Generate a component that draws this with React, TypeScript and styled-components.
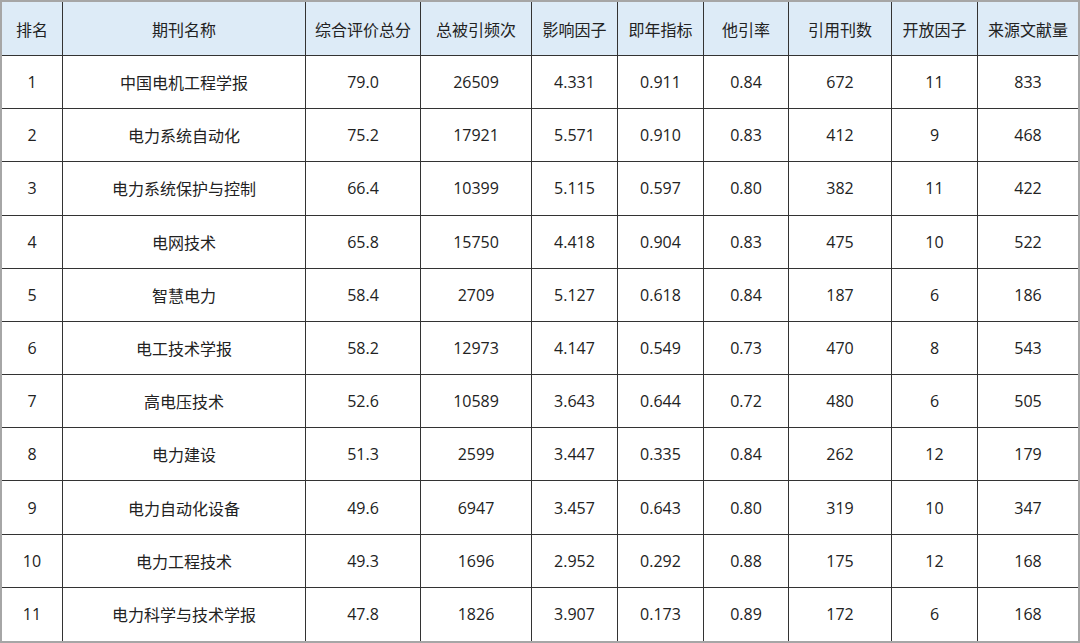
import React from "react";
import styled, { createGlobalStyle } from "styled-components";

const Global = createGlobalStyle`
  html, body { margin: 0; padding: 0; background: #ffffff; }
  body { font-family: "Open Sans", "Noto Sans CJK SC", sans-serif; }
`;

const Frame = styled.div`
  box-sizing: border-box;
  width: 1080px;
  height: 643px;
  border: 2px solid #a6a6a6;
  display: grid;
  grid-template-columns: 61px 243px 115px 111px 86px 86px 85px 103px 86px 100px;
  grid-template-rows: 54px repeat(11, 1fr);
  background: #ffffff;
`;

const Cell = styled.div<{ $head?: boolean; $lastCol?: boolean; $lastRow?: boolean }>`
  box-sizing: border-box;
  display: flex;
  align-items: center;
  justify-content: center;
  font-size: 16px;
  color: #222222;
  white-space: nowrap;
  background: ${(p) => (p.$head ? "#ddebf7" : "#ffffff")};
  border-right: ${(p) => (p.$lastCol ? "none" : "1px solid #333333")};
  border-bottom: ${(p) => (p.$lastRow ? "none" : "1px solid #333333")};
`;

const headers = ["排名", "期刊名称", "综合评价总分", "总被引频次", "影响因子", "即年指标", "他引率", "引用刊数", "开放因子", "来源文献量"];

const rows: string[][] = [
  ["1", "中国电机工程学报", "79.0", "26509", "4.331", "0.911", "0.84", "672", "11", "833"],
  ["2", "电力系统自动化", "75.2", "17921", "5.571", "0.910", "0.83", "412", "9", "468"],
  ["3", "电力系统保护与控制", "66.4", "10399", "5.115", "0.597", "0.80", "382", "11", "422"],
  ["4", "电网技术", "65.8", "15750", "4.418", "0.904", "0.83", "475", "10", "522"],
  ["5", "智慧电力", "58.4", "2709", "5.127", "0.618", "0.84", "187", "6", "186"],
  ["6", "电工技术学报", "58.2", "12973", "4.147", "0.549", "0.73", "470", "8", "543"],
  ["7", "高电压技术", "52.6", "10589", "3.643", "0.644", "0.72", "480", "6", "505"],
  ["8", "电力建设", "51.3", "2599", "3.447", "0.335", "0.84", "262", "12", "179"],
  ["9", "电力自动化设备", "49.6", "6947", "3.457", "0.643", "0.80", "319", "10", "347"],
  ["10", "电力工程技术", "49.3", "1696", "2.952", "0.292", "0.88", "175", "12", "168"],
  ["11", "电力科学与技术学报", "47.8", "1826", "3.907", "0.173", "0.89", "172", "6", "168"],
];

export default function App() {
  return (
    <>
      <Global />
      <Frame>
        {headers.map((h, i) => (
          <Cell key={"h" + i} $head $lastCol={i === headers.length - 1}>
            {h}
          </Cell>
        ))}
        {rows.map((r, ri) =>
          r.map((c, ci) => (
            <Cell
              key={ri + "-" + ci}
              $lastCol={ci === r.length - 1}
              $lastRow={ri === rows.length - 1}
            >
              {c}
            </Cell>
          ))
        )}
      </Frame>
    </>
  );
}
